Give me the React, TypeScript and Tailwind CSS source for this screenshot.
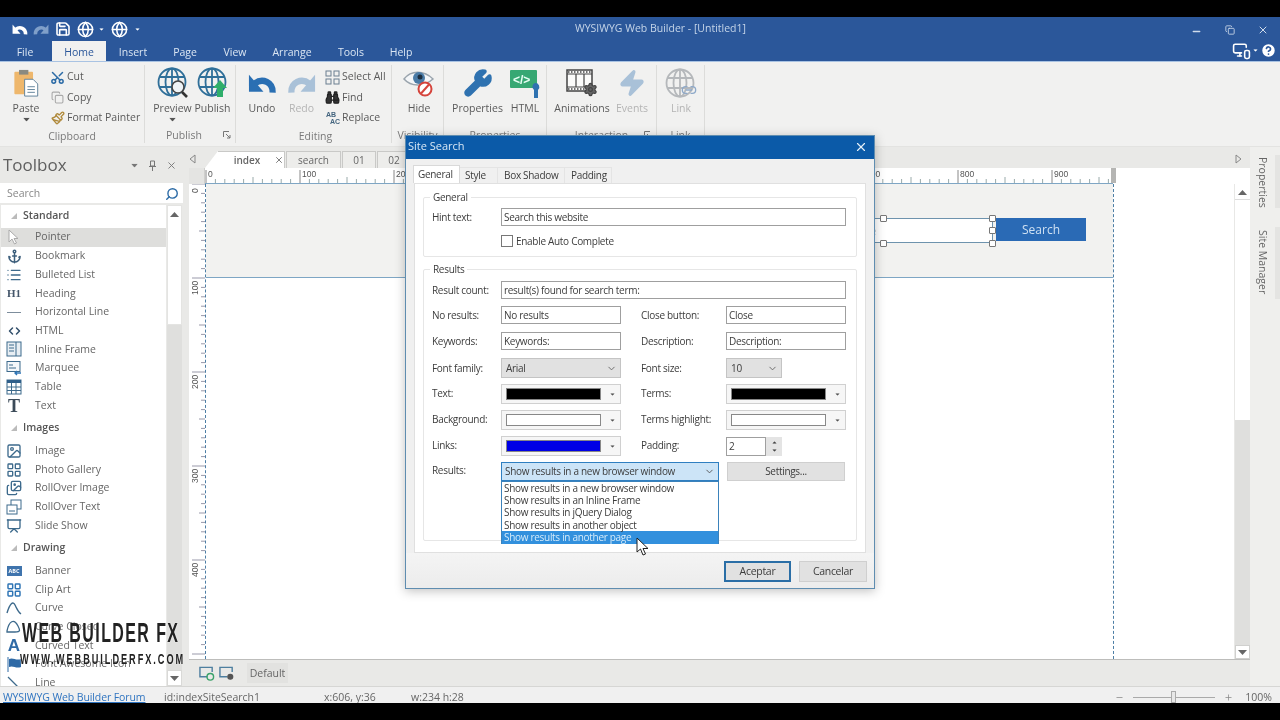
import React from "react";
import {
  Save, Globe, Search, Scissors, Copy, Paintbrush, Binoculars, Wrench, Zap, X, Minus, Anchor, List, ChevronLeft, ChevronRight,
  ChevronDown, Plus, Settings, Link2, HelpCircle, MonitorSmartphone, Image as ImageIcon, LayoutGrid, Images, Presentation,
} from "lucide-react";

const Tri = ({ up = false, cls = "" }: { up?: boolean; cls?: string }) => (
  <svg width="9" height="5" viewBox="0 0 9 5" className={cls}>
    <path d={up ? "M4.5 0 9 5H0z" : "M0 0h9L4.5 5z"} fill="currentColor" />
  </svg>
);

const CurlArrow = ({ w, h, color, flip }: { w: number; h: number; color: string; flip?: boolean }) => (
  <svg width={w} height={h} viewBox="0 0 30 22" className={flip ? "-scale-x-100" : ""}>
    <path d="M25.500 21C26 10 15 5.500 7 11.500" fill="none" stroke={color} strokeWidth="6.500" />
    <path d="M1 2.500V20h15z" fill={color} />
  </svg>
);

const GlobeIcon = ({ color = "#2f6f99", children }: { color?: string; children?: React.ReactNode }) => (
  <svg width="32" height="32" viewBox="0 0 32 32">
    <g fill="none" stroke={color} strokeWidth="1.8">
      <circle cx="15" cy="15" r="13.5" />
      <ellipse cx="15" cy="15" rx="6.5" ry="13.5" />
      <path d="M2 10h26M2 20h26M15 1.5v27" />
    </g>
    {children}
  </svg>
);

const BigBtn = ({ w, label, muted, drop, children }: { w: string; label: string; muted?: boolean; drop?: boolean; children: React.ReactNode }) => (
  <div className={`flex flex-col items-center shrink-0 ${w}`}>
    <div className="h-[36px] flex items-center justify-center">{children}</div>
    <div className={`h-[15px] leading-[15px] text-[10.5px] whitespace-nowrap ${muted ? "text-[#b4b4b4]" : "text-[#5a5a5a]"}`}>{label}</div>
    {drop && <Tri cls="text-[#555] mt-[1px] scale-75" />}
  </div>
);

const SmallBtn = ({ icon, label }: { icon: React.ReactNode; label: string }) => (
  <div className="flex items-center h-[20.5px] whitespace-nowrap text-[10.5px] text-[#5a5a5a]">
    <div className="w-[17px] flex justify-center shrink-0">{icon}</div>
    <span className="ml-[1px]">{label}</span>
  </div>
);

const Group = ({ w, label, labelCls = "", launcher, children }: { w: string; label: string; labelCls?: string; launcher?: boolean; children: React.ReactNode }) => (
  <div className={`relative flex flex-col shrink-0 border-r border-[#dcdcda] mt-[3px] mb-[3px] ${w}`}>
    <div className="flex h-[65px] items-start">{children}</div>
    <div className={`h-[15px] leading-[15px] text-center text-[10.5px] text-[#7a7a7a] ${labelCls}`}>{label}</div>
    {launcher && (
      <svg width="8" height="8" viewBox="0 0 8 8" className="absolute right-[4px] bottom-[4px]">
        <path d="M.5 6V.5H6M3 3l4 4M7 4v3H4" fill="none" stroke="#777" />
      </svg>
    )}
  </div>
);

const BoxIcon = ({ children }: { children: React.ReactNode }) => (
  <svg width="16" height="16" viewBox="0 0 16 16" fill="none" stroke="#3d6a8c" strokeWidth="1">{children}</svg>
);

type Tool = { n: string; i: React.ReactNode };
const standard: Tool[] = [
  { n: "Pointer", i: <svg width="14" height="16" viewBox="0 0 14 16"><path d="M2 1v12l3-3 2.500 5 2-1-2.500-4.500h4z" fill="#fff" stroke="#aaa" /></svg> },
  { n: "Bookmark", i: <Anchor size={15} color="#3d5f7c" strokeWidth={2.4} /> },
  { n: "Bulleted List", i: <List size={16} color="#3d6a8c" strokeWidth={2} /> },
  { n: "Heading", i: <span className="font-['Liberation_Serif',serif] font-bold text-[11px] text-[#44566a]">H1</span> },
  { n: "Horizontal Line", i: <div className="w-[14px] h-[1px] bg-[#7d8d9c]" /> },
  { n: "HTML", i: <span className="flex text-[#33506b] -space-x-[5px]"><ChevronLeft size={12} strokeWidth={3} /><ChevronRight size={12} strokeWidth={3} /></span> },
  { n: "Inline Frame", i: <BoxIcon><rect x="1" y="1" width="14" height="14" fill="#e8eef3" /><path d="M10 1v14M3 4h5M3 7h5M3 10h5" /></BoxIcon> },
  { n: "Marquee", i: <BoxIcon><rect x="1" y="1.500" width="13" height="10" fill="#f4f7fa" /><path d="M3 5h4M3 8h7" /><path d="M9 13h6M11 11l-2 2 2 2" stroke="#2e74b5" strokeWidth="1.400" /></BoxIcon> },
  { n: "Table", i: <BoxIcon><rect x="1" y="1" width="14" height="14" /><path d="M1 2.500h14" strokeWidth="3" stroke="#2f5f8a" /><path d="M1 8h14M1 11.500h14M5.500 4v11M10 4v11" /></BoxIcon> },
  { n: "Text", i: <span className="font-['Liberation_Serif',serif] font-bold text-[18px] leading-none text-[#3b4a58]">T</span> },
];
const images: Tool[] = [
  { n: "Image", i: <ImageIcon size={16} color="#3d6a8c" /> },
  { n: "Photo Gallery", i: <LayoutGrid size={16} color="#3d6a8c" /> },
  { n: "RollOver Image", i: <Images size={16} color="#3d6a8c" /> },
  { n: "RollOver Text", i: <BoxIcon><rect x="5" y="1" width="10" height="9" /><rect x="1" y="6" width="10" height="9" fill="#fff" /><path d="M3 12h6" /></BoxIcon> },
  { n: "Slide Show", i: <Presentation size={16} color="#3d6a8c" /> },
];
const drawing: Tool[] = [
  { n: "Banner", i: <div className="w-[15px] h-[10px] bg-[#3f74ad] text-[5.500px] leading-[10px] text-center text-white font-bold">ABC</div> },
  { n: "Clip Art", i: <LayoutGrid size={16} color="#2e74b5" strokeWidth={2.200} /> },
  { n: "Curve", i: <BoxIcon><path d="M1 13C4 3 7 1 9 5s3 7 6 9" strokeWidth="1.400" /></BoxIcon> },
  { n: "Curve Closed", i: <BoxIcon><path d="M1 12C3 2 8-1 12 7c2 4 3 6-3 6H1z" strokeWidth="1.300" /></BoxIcon> },
  { n: "Curved Text", i: <span className="font-['Liberation_Sans',sans-serif] font-bold text-[17px] leading-none text-[#2f6aa6]">A</span> },
  { n: "Font Awesome Icon", i: <svg width="16" height="16" viewBox="0 0 16 16"><path d="M2 1v15" stroke="#2f6aa6" /><path d="M3 3c4-2 7 2 12 0v8c-5 2-8-2-12 0z" fill="#2f6aa6" /></svg> },
  { n: "Line", i: <BoxIcon><path d="M2 2l12 12" strokeWidth="1.300" /></BoxIcon> },
];

const ToolRow = ({ t, active }: { t: Tool; active?: boolean }) => (
  <div className={`flex items-center h-[18.7px] text-[10.5px] text-[#666] ${active ? "bg-[#dededc]" : ""}`}>
    <div className="w-[22px] ml-[2px] mr-[10px] flex justify-center shrink-0">{t.i}</div>
    <span className="whitespace-nowrap">{t.n}</span>
  </div>
);

const SectionHead = ({ label, h }: { label: string; h: string }) => (
  <div className={`flex items-center ${h} text-[10.5px] font-semibold text-[#555]`}>
    <svg width="6" height="6" viewBox="0 0 6 6" className="ml-[10px] mr-[6px]"><path d="M6 0v6H0z" fill="#bbb" /></svg>
    {label}
  </div>
);

const HRuler = () => {
  const ticks = [];
  for (let i = 0; i <= 97; i++) {
    const x = 1 + i * 9.4;
    ticks.push(<path key={i} d={`M${x} ${i % 10 === 0 ? 2 : i % 5 === 0 ? 9 : 11}V16`} stroke={i % 10 === 0 ? "#888" : "#9aa"} strokeWidth="1" />);
  }
  const labels = [0, 100, 200, 300, 400, 500, 600, 700, 800, 900];
  return (
    <svg width="908" height="16" className="block">
      {ticks}
      {labels.map((l, k) => (
        <text key={l} x={3 + k * 94} y="9" fontSize="8.5" fill="#555" fontFamily="Liberation Sans, sans-serif">{l}</text>
      ))}
      <path d="M0 15.500h908" stroke="#7fa6c4" />
    </svg>
  );
};

const VRuler = () => {
  const ticks = [];
  for (let i = 0; i <= 51; i++) {
    const y = i * 9.4;
    ticks.push(<path key={i} d={`M${i % 10 === 0 ? 3 : i % 5 === 0 ? 10 : 12} ${y}H16`} stroke="#99a" strokeWidth="1" />);
  }
  return (
    <svg width="16" height="476" className="block">
      {ticks}
      {[0, 100, 200, 300, 400].map((l, k) => (
        <text key={l} x="0" y="0" fontSize="8.5" fill="#555" fontFamily="Liberation Sans, sans-serif" transform={`translate(9 ${l === 0 ? 9 : 17 + k * 94}) rotate(-90)`}>{l}</text>
      ))}
    </svg>
  );
};

const DocTab = ({ w, label, active }: { w: string; label: string; active?: boolean }) => (
  <div className={`h-[17px] flex items-center justify-center text-[10px] text-[#666] border-t border-r border-[#c9c9c7] shrink-0 ${w} ${active ? "bg-white font-semibold pl-[10px]" : "bg-[#ededeb] border-l"}`}>
    {label}
    {active && <X size={10} className="ml-[14px] mr-[-6px] text-[#666]" />}
  </div>
);

const Handle = ({ cls }: { cls: string }) => <div className={`absolute w-[7px] h-[7px] bg-white border border-[#777] rounded-[1px] ${cls}`} />;

const Label = ({ w, children }: { w: string; children: React.ReactNode }) => <div className={`shrink-0 ${w}`}>{children}</div>;

const Input = ({ w, value }: { w: string; value: string }) => (
  <div className={`h-[18px] border border-[#9f9f9f] bg-white px-[2px] leading-[16px] whitespace-nowrap overflow-hidden shrink-0 ${w}`}>{value}</div>
);

const GraySelect = ({ w, value }: { w: string; value: string }) => (
  <div className={`h-[20px] border border-[#c4c4c4] bg-[#e1e1e1] flex items-center justify-between pl-[3px] pr-[3px] shrink-0 ${w}`}>
    <span className="ml-[1px]">{value}</span>
    <ChevronDown size={11} className="text-[#666]" />
  </div>
);

const ColorPick = ({ swatch }: { swatch: string }) => (
  <div className="h-[20px] w-[120px] border border-[#d0d0d0] bg-[#f6f6f6] flex items-center pl-[4px] shrink-0">
    <div className={`w-[95px] h-[12px] border border-[#888] ${swatch}`} />
    <Tri cls="ml-[7px] scale-50 text-[#555]" />
  </div>
);

const Row = ({ cls, children }: { cls: string; children: React.ReactNode }) => <div className={`flex items-center pl-[8px] ${cls}`}>{children}</div>;

const Fieldset = ({ legend, cls, children }: { legend: string; cls: string; children: React.ReactNode }) => (
  <div className={`relative border border-[#e6e6e6] rounded-[2px] ml-[8px] w-[434px] ${cls}`}>
    <div className="absolute -top-[7px] left-[6px] bg-white px-[3px] leading-[13px]">{legend}</div>
    {children}
  </div>
);

const DialogTab = ({ w, label, active, pl }: { w: string; label: string; active?: boolean; pl: string }) => (
  <div className={`flex items-center shrink-0 whitespace-nowrap ${pl} ${w} ${active ? "h-[18px] bg-white border border-b-0 border-[#d9d9d9]" : "h-[16px] bg-[#f0f0f0] border-t border-r border-[#e4e4e4]"}`}>{label}</div>
);

const Dialog = () => (
  <div className="absolute left-[405px] top-[135px] w-[470px] h-[454px] bg-[#f0f0f0] border border-[#5f8db0] flex flex-col font-['Open_Sans',sans-serif] text-[10px] tracking-[-0.3px] text-[#3c3c3c] shadow-[0_2px_10px_rgba(0,0,0,0.25)]">
    <div className="h-[23px] bg-[#0b5aa8] flex items-center justify-between pl-[2px] pr-[6px] pb-[2px] shrink-0">
      <span className="text-[11px] tracking-normal text-[#d9e8f5]">Site Search</span>
      <X size={14} className="text-[#e6f0f8]" />
    </div>
    <div className="flex items-end h-[25px] pl-[7px] pb-[1px] shrink-0">
      <DialogTab w="w-[47px]" pl="pl-[4px]" label="General" active />
      <DialogTab w="w-[38px]" pl="pl-[5px]" label="Style" />
      <DialogTab w="w-[67px]" pl="pl-[6px]" label="Box Shadow" />
      <DialogTab w="w-[47px]" pl="pl-[6px]" label="Padding" />
    </div>
    <div className="w-[452px] ml-[8px] h-[370px] bg-white border border-[#e0e0e0] -mt-[1px] pt-[13px] shrink-0 relative">
      <Fieldset legend="General" cls="h-[60px] ml-[8px]">
        <Row cls="mt-[10px] h-[18px]">
          <Label w="w-[69px]">Hint text:</Label>
          <Input w="w-[345px]" value="Search this website" />
        </Row>
        <Row cls="mt-[9px] h-[12px]">
          <div className="ml-[69px] w-[12px] h-[12px] border border-[#777] bg-white mr-[3px]" />
          <span>Enable Auto Complete</span>
        </Row>
      </Fieldset>
      <Fieldset legend="Results" cls="h-[272px] mt-[12px]">
        <Row cls="mt-[11px] h-[18px]">
          <Label w="w-[69px]">Result count:</Label>
          <Input w="w-[345px]" value="result(s) found for search term:" />
        </Row>
        <Row cls="mt-[7px] h-[18px]">
          <Label w="w-[69px]">No results:</Label>
          <Input w="w-[120px]" value="No results" />
          <Label w="w-[85px] ml-[20px]">Close button:</Label>
          <Input w="w-[120px]" value="Close" />
        </Row>
        <Row cls="mt-[8px] h-[18px]">
          <Label w="w-[69px]">Keywords:</Label>
          <Input w="w-[120px]" value="Keywords:" />
          <Label w="w-[85px] ml-[20px]">Description:</Label>
          <Input w="w-[120px]" value="Description:" />
        </Row>
        <Row cls="mt-[8px] h-[20px]">
          <Label w="w-[69px]">Font family:</Label>
          <GraySelect w="w-[120px]" value="Arial" />
          <Label w="w-[85px] ml-[20px]">Font size:</Label>
          <GraySelect w="w-[56px]" value="10" />
        </Row>
        <Row cls="mt-[6px] h-[20px]">
          <Label w="w-[69px] pb-[2px]">Text:</Label>
          <ColorPick swatch="bg-black" />
          <Label w="w-[85px] ml-[20px] pb-[2px]">Terms:</Label>
          <ColorPick swatch="bg-black" />
        </Row>
        <Row cls="mt-[6px] h-[20px]">
          <Label w="w-[69px] pb-[2px]">Background:</Label>
          <ColorPick swatch="bg-white" />
          <Label w="w-[85px] ml-[20px] pb-[2px]">Terms highlight:</Label>
          <ColorPick swatch="bg-white" />
        </Row>
        <Row cls="mt-[6px] h-[20px]">
          <Label w="w-[69px] pb-[2px]">Links:</Label>
          <ColorPick swatch="bg-[#0000e6]" />
          <Label w="w-[85px] ml-[20px] pb-[2px]">Padding:</Label>
          <div className="h-[19px] w-[40px] border border-[#9f9f9f] bg-white px-[2px] leading-[17px] shrink-0">2</div>
          <div className="h-[19px] w-[16px] bg-[#e4e4e4] flex flex-col items-center justify-center gap-[3px] text-[#444] shrink-0">
            <Tri up cls="scale-50" />
            <Tri cls="scale-50" />
          </div>
        </Row>
        <Row cls="mt-[6px] h-[19px]">
          <Label w="w-[69px] pb-[2px]">Results:</Label>
          <div className="relative h-[19px] w-[218px] border border-[#2f7fc1] bg-[#cce4f7] flex items-center justify-between px-[3px] shrink-0">
            <span className="whitespace-nowrap">Show results in a new browser window</span>
            <ChevronDown size={11} className="text-[#555]" />
            <div className="absolute left-[-1px] top-[18px] w-[218px] h-[63px] bg-white border border-[#3b82bb] leading-[12.200px] z-10">
              <div className="pl-[2px] h-[12.200px]">Show results in a new browser window</div>
              <div className="pl-[2px] h-[12.200px]">Show results in an Inline Frame</div>
              <div className="pl-[2px] h-[12.200px]">Show results in jQuery Dialog</div>
              <div className="pl-[2px] h-[12.200px]">Show results in another object</div>
              <div className="pl-[2px] h-[13px] bg-[#3290dd] text-[#d5ebfa]">Show results in another page</div>
            </div>
          </div>
          <div className="h-[19px] w-[118px] ml-[8px] border border-[#cfcfcf] bg-[#e1e1e1] flex items-center justify-center shrink-0">Settings...</div>
        </Row>
      </Fieldset>
      <svg width="14" height="20" viewBox="0 0 14 20" className="absolute left-[221px] top-[353px] z-20">
        <path d="M1 1v14l3.500-3 2.500 6 2.500-1-2.500-5.500H12z" fill="#fff" stroke="#222" strokeWidth="1" />
      </svg>
    </div>
    <div className="flex-1 flex items-center justify-end pr-[7px] pt-[2px] gap-[8px] text-[10.5px] bg-gradient-to-b from-[#f4f4f4] to-[#ececec]">
      <div className="w-[67px] h-[21px] border-2 border-[#2a6ea6] bg-[#e1e1e1] flex items-center justify-center">Aceptar</div>
      <div className="w-[68px] h-[21px] border border-[#cfcfcf] bg-[#e1e1e1] flex items-center justify-center">Cancelar</div>
    </div>
  </div>
);

export default function App() {
  return (
    <div className="relative w-[1280px] h-[720px] overflow-hidden bg-black flex flex-col font-['Open_Sans',sans-serif] blur-[0.35px]">
      <div className="h-[17px] shrink-0" />
      {/* Title bar + ribbon tabs */}
      <div className="h-[45px] shrink-0 bg-[#2b579a] border-b border-[#a9c3e3] flex flex-col text-[#dbe6f3]">
        <div className="h-[24px] relative flex items-center pl-[12px] gap-[5px]">
          <CurlArrow w={16} h={12} color="#fff" />
          <CurlArrow w={16} h={12} color="#7f9fc9" flip />
          <Save size={16} strokeWidth={2.400} className="text-white ml-[1px]" />
          <Globe size={17} strokeWidth={2.200} className="text-white ml-[1px]" />
          <Tri cls="scale-50 -ml-[2px] text-white" />
          <Globe size={17} strokeWidth={2.200} className="text-white" />
          <Tri cls="scale-50 text-white" />
          <span className="absolute left-0 right-0 text-center text-[10.500px] text-[#c4d4e8] pl-[41px] pointer-events-none">WYSIWYG Web Builder - [Untitled1]</span>
          <div className="absolute right-[6px] top-[6px] flex items-center text-[#d0dceb]">
            <Minus size={11} strokeWidth={3} className="mr-[23px] mt-[3px]" />
            <Copy size={10} className="mr-[22px]" />
            <X size={12} strokeWidth={2} className="mr-[5px]" />
          </div>
        </div>
        <div className="h-[20px] flex text-[10.5px] items-end relative">
          <div className="w-[50px] mr-[2px] h-[20px] leading-[22px] text-center">File</div>
          <div className="w-[54px] h-[20px] leading-[22px] text-center bg-[#f1f1f0] text-[#2b579a]">Home</div>
          <div className="w-[54px] h-[20px] leading-[22px] text-center">Insert</div>
          <div className="w-[50px] h-[20px] leading-[22px] text-center">Page</div>
          <div className="w-[50px] h-[20px] leading-[22px] text-center">View</div>
          <div className="w-[64px] h-[20px] leading-[22px] text-center">Arrange</div>
          <div className="w-[54px] h-[20px] leading-[22px] text-center">Tools</div>
          <div className="w-[46px] h-[20px] leading-[22px] text-center">Help</div>
          <div className="absolute right-[3px] top-[0px] flex items-center text-white">
            <MonitorSmartphone size={19} />
            <Tri cls="scale-50" />
            <HelpCircle size={17} strokeWidth={2.400} fill="#fff" className="text-[#2b579a]" />
          </div>
        </div>
      </div>
      {/* Ribbon */}
      <div className="h-[85px] shrink-0 bg-[#f1f1f0] flex border-b border-[#e3e3e1]">
        <Group w="w-[145px]" label="Clipboard">
          <div className="flex pl-[3px]">
            <BigBtn w="w-[46px]" label="Paste" drop>
              <svg width="27" height="28" viewBox="0 0 28 30">
                <rect x="1" y="3" width="20" height="24" rx="1" fill="#eeb76c" />
                <rect x="6" y="1" width="10" height="5" fill="#8a8a80" />
                <path d="M12 11h9l5 5v13H12z" fill="#fff" stroke="#5c7f98" />
                <path d="M15 19h8M15 22h8M15 25h8" stroke="#5c7f98" />
              </svg>
            </BigBtn>
            <div className="flex flex-col mt-[2px]">
              <SmallBtn icon={<Scissors size={15} className="text-[#2c6ba6] -rotate-90" strokeWidth={2.400} />} label="Cut" />
              <SmallBtn icon={<Copy size={13} className="text-[#a9a9a9]" />} label="Copy" />
              <SmallBtn icon={<Paintbrush size={14} className="text-[#b08a3c]" strokeWidth={2.400} />} label="Format Painter" />
            </div>
          </div>
        </Group>
        <Group w="w-[91px]" label="Publish" labelCls="pr-[12px]" launcher>
          <div className="flex pl-[7px]">
            <BigBtn w="w-[41px]" label="Preview" drop>
              <GlobeIcon>
                <circle cx="21" cy="20" r="6" fill="#eef3f6" stroke="#444" strokeWidth="1.600" />
                <path d="M25 25l5 5" stroke="#333" strokeWidth="2.600" />
              </GlobeIcon>
            </BigBtn>
            <BigBtn w="w-[39px]" label="Publish">
              <GlobeIcon>
                <path d="M23 13l7 8h-4v9h-6v-9h-4z" fill="#2fae6a" />
              </GlobeIcon>
            </BigBtn>
          </div>
        </Group>
        <Group w="w-[156px]" label="Editing" labelCls="pl-[4px]">
          <div className="flex pl-[6px]">
            <BigBtn w="w-[40px]" label="Undo"><CurlArrow w={29} h={22} color="#2a6fb3" /></BigBtn>
            <BigBtn w="w-[39px]" label="Redo" muted><CurlArrow w={29} h={22} color="#a9c1d8" flip /></BigBtn>
            <div className="flex flex-col mt-[2px] ml-[3px]">
              <SmallBtn
                icon={
                  <svg width="15" height="15" viewBox="0 0 15 15" fill="none" stroke="#6b7f90"><rect x="1" y="1" width="5" height="5" /><rect x="9" y="1" width="5" height="5" /><rect x="1" y="9" width="5" height="5" /><rect x="9" y="9" width="5" height="5" /></svg>
                }
                label="Select All"
              />
              <SmallBtn icon={<Binoculars size={15} className="text-[#222]" fill="#333" />} label="Find" />
              <SmallBtn
                icon={
                  <svg width="16" height="16" viewBox="0 0 16 16">
                    <text x="1" y="7" fontSize="7" fontWeight="bold" fill="#44657f" fontFamily="Liberation Sans, sans-serif">AB</text>
                    <text x="5" y="14" fontSize="7" fontWeight="bold" fill="#44657f" fontFamily="Liberation Sans, sans-serif">AC</text>
                  </svg>
                }
                label="Replace"
              />
            </div>
          </div>
        </Group>
        <Group w="w-[52px]" label="Visibility">
          <div className="pl-[1px]">
            <BigBtn w="w-[52px]" label="Hide">
              <svg width="32" height="30" viewBox="0 0 32 30">
                <path d="M1 11C8 2 21 2 30 11 21 19 8 19 1 11z" fill="#f4f6f8" stroke="#9aa4ad" strokeWidth="1.500" />
                <circle cx="16" cy="10" r="6" fill="#4a7ba6" />
                <circle cx="17" cy="9" r="2.500" fill="#1d2f40" />
                <circle cx="22" cy="21" r="6.500" fill="#fff" stroke="#d5443c" strokeWidth="2" />
                <path d="M18 25.500l8-9" stroke="#d5443c" strokeWidth="2" />
              </svg>
            </BigBtn>
          </div>
        </Group>
        <Group w="w-[103px]" label="Properties">
          <div className="flex pl-[4px]">
            <BigBtn w="w-[59px]" label="Properties"><Wrench size={30} className="text-[#2f72b0]" fill="#2f72b0" /></BigBtn>
            <BigBtn w="w-[36px]" label="HTML">
              <svg width="32" height="30" viewBox="0 0 32 30">
                <rect x="1" y="2" width="27" height="18" rx="1" fill="#37a873" />
                <text x="4" y="16" fontSize="12" fontWeight="bold" fill="#e8fff4" fontFamily="Liberation Sans, sans-serif">&lt;/&gt;</text>
                <path d="M26 15a4 4 0 0 1 3 7v8h-4v-8a4 4 0 0 1 1-7z" fill="#2f72b0" />
              </svg>
            </BigBtn>
          </div>
        </Group>
        <Group w="w-[110px]" label="Interaction" launcher>
          <div className="flex pl-[5px]">
            <BigBtn w="w-[60px]" label="Animations">
              <span className="relative block w-[32px] h-[28px]">
                <svg width="27" height="24" viewBox="0 0 27 24" fill="none" stroke="#444">
                  <rect x="1" y="1" width="25" height="21" fill="#fbfbfa" strokeWidth="1.500" />
                  <path d="M1 5h25M1 18h25M10 5v13M18 5v13" strokeWidth="1.200" />
                  <path d="M2 3h23M2 20h23" strokeDasharray="1.500 1.500" strokeWidth="1.500" />
                </svg>
                <Settings size={15} className="absolute right-[0px] bottom-0 text-[#444]" fill="#666" />
              </span>
            </BigBtn>
            <div className="ml-[2px]">
              <BigBtn w="w-[36px]" label="Events" muted><Zap size={28} className="text-[#a9c1d8]" fill="#a9c1d8" /></BigBtn>
            </div>
          </div>
        </Group>
        <Group w="w-[48px]" label="Link">
          <BigBtn w="w-[48px]" label="Link" muted>
            <span className="relative block w-[32px] h-[30px]">
              <GlobeIcon color="#b5b8bb" />
              <Link2 size={16} className="absolute right-0 bottom-0 text-[#8ea9c9]" />
            </span>
          </BigBtn>
        </Group>
      </div>
      {/* Main */}
      <div className="h-[539px] shrink-0 flex bg-[#e9e9e7]">
        {/* Toolbox */}
        <div className="w-[183px] shrink-0 flex flex-col">
          <div className="h-[36px] flex items-center justify-between pl-[3px] pr-[6px] shrink-0">
            <span className="text-[17px] text-[#5f5f5f]">Toolbox</span>
            <span className="flex items-center gap-[9px] text-[#777]">
              <Tri cls="scale-75" />
              <svg width="9" height="11" viewBox="0 0 9 11" fill="none" stroke="#777"><path d="M2.500 1h4v5h-4zM1 6.500h7M4.500 7v4" /></svg>
              <X size={11} />
            </span>
          </div>
          <div className="h-[20px] bg-white flex items-center justify-between pl-[7px] pr-[4px] pt-[1px] text-[10.5px] text-[#888] shrink-0">
            Search
            <Search size={14} strokeWidth={2.400} className="text-[#2c6ba6] -scale-x-100" />
          </div>
          <div className="mt-[2px] flex-1 flex min-h-0">
            <div className="w-[165px] ml-[1px] bg-white overflow-hidden">
              <SectionHead label="Standard" h="h-[23px] pb-[2px]" />
              {standard.map((t, i) => <ToolRow key={t.n} t={t} active={i === 0} />)}
              <SectionHead label="Images" h="h-[26.600px]" />
              {images.map((t) => <ToolRow key={t.n} t={t} />)}
              <SectionHead label="Drawing" h="h-[26.600px]" />
              {drawing.map((t) => <ToolRow key={t.n} t={t} />)}
            </div>
            <div className="w-[15px] flex flex-col justify-between bg-[#dfdfdd] ml-[1px]">
              <div className="h-[120px] bg-white border border-[#e4e4e2] pt-[6px] flex justify-center"><Tri up cls="text-[#666]" /></div>
              <div className="h-[16px] bg-white border border-[#d9d9d7] flex items-center justify-center"><Tri cls="text-[#666]" /></div>
            </div>
          </div>
        </div>
        {/* Workspace */}
        <div className="flex-1 flex flex-col min-w-0">
          <div className="h-[21px] flex items-end shrink-0 pl-[6px]">
            <svg width="8" height="10" viewBox="0 0 8 10" className="self-center mt-[3px] shrink-0"><path d="M6 1v8L1 5z" fill="none" stroke="#888" /></svg>
            <div className="ml-[8px] flex gap-[1px]">
              <svg width="13" height="17" viewBox="0 0 13 17" className="shrink-0 -mr-[1px]"><path d="M0 17 13 0v17z" fill="#fff" /></svg>
              <DocTab w="w-[67px]" label="index" active />
              <DocTab w="w-[55px]" label="search" />
              <DocTab w="w-[34px]" label="01" />
              <DocTab w="w-[34px]" label="02" />
            </div>
            <svg width="8" height="10" viewBox="0 0 8 10" className="ml-auto mr-[8px] self-center mt-[3px] shrink-0"><path d="M2 1v8l5-4z" fill="none" stroke="#888" /></svg>
          </div>
          <div className="ml-[6px] h-[492px] shrink-0 flex flex-col bg-white border-b border-[#bdbdbb]">
            <div className="h-[16px] flex shrink-0 bg-white">
              <div className="w-[16px] h-[16px] bg-[#e4e4e2] border-r border-[#cfcfcd] shrink-0" />
              <div className="w-[908px] shrink-0"><HRuler /></div>
              <div className="w-[5px] h-[15px] bg-[#b5b5b3] -ml-[2px] shrink-0" />
            </div>
            <div className="flex h-[476px] min-h-0">
              <div className="w-[16px] shrink-0 bg-white"><VRuler /></div>
              <div className="w-[909px] shrink-0 flex flex-col border-l border-dashed border-[#4d7ea5] border-r">
                <div className="relative h-[94px] bg-[#f2f2f0] border-b border-[#7ea6c4] shrink-0">
                  <div className="absolute left-[570px] top-[34px] w-[217px] h-[25px] bg-white border border-[#6e93ad] text-[10.5px] text-[#c6c6c6] leading-[25px] pl-[5px]">Search this website</div>
                  <Handle cls="left-[674px] top-[31px]" />
                  <Handle cls="left-[783px] top-[31px]" />
                  <Handle cls="left-[783px] top-[43px]" />
                  <Handle cls="left-[674px] top-[56px]" />
                  <Handle cls="left-[783px] top-[56px]" />
                  <div className="absolute left-[790px] top-[34px] w-[90px] h-[23px] bg-[#2a6ab5] text-[#cfe1f3] text-[12px] leading-[23px] text-center">Search</div>
                </div>
              </div>
              <div className="flex-1" />
              <div className="w-[16px] shrink-0 flex flex-col justify-between bg-[#dfdfdd] border-l border-[#e8e8e6]">
                <div className="h-[236px] bg-white pt-[6px] flex justify-center"><div className="w-full h-[15px] -mt-[5px] border-b border-[#ddd] flex items-center justify-center"><Tri up cls="text-[#666]" /></div></div>
                <div className="h-[14px] bg-white border border-[#d0d0ce] flex items-center justify-center"><Tri cls="text-[#666]" /></div>
              </div>
            </div>
          </div>
          <div className="flex-1 flex items-center pl-[16px] text-[#7a9a9a]">
            <svg width="16" height="15" viewBox="0 0 17 15" fill="none" stroke="#4e7f9f" strokeWidth="1.500"><path d="M9 11H1V1h13v5" /><circle cx="12" cy="11" r="3.500" stroke="#3aa26a" /></svg>
            <svg width="16" height="15" viewBox="0 0 17 15" fill="none" stroke="#4e7f9f" strokeWidth="1.500" className="ml-[4px]"><path d="M9 11H1V1h13v5" /><circle cx="12" cy="11" r="2.500" fill="#555" stroke="#555" /></svg>
            <div className="ml-[12px] w-[41px] h-[20px] bg-[#e2e2e0] text-[10.5px] text-[#666] leading-[20px] text-center">Default</div>
          </div>
        </div>
        {/* Right dock */}
        <div className="w-[30px] shrink-0 bg-[#efefed] relative">
          <div className="absolute right-0 top-[8px] w-[5px] h-[53px] bg-[#e4e4e2]" />
          <div className="absolute right-0 top-[80px] w-[5px] h-[72px] bg-[#e4e4e2]" />
          <div className="absolute left-[4px] top-[10px] [writing-mode:vertical-rl] text-[10.5px] text-[#666]">Properties</div>
          <div className="absolute left-[4px] top-[83px] [writing-mode:vertical-rl] text-[10.5px] text-[#666]">Site Manager</div>
        </div>
      </div>
      {/* Status bar */}
      <div className="h-[17px] shrink-0 bg-[#f0f0f0] border-t border-[#d6d6d4] flex items-center pt-[5px] text-[10.5px] text-[#666] whitespace-nowrap overflow-hidden">
        <span className="w-[164px] pl-[3px] text-[#2f74c0] underline tracking-[-0.1px] shrink-0">WYSIWYG Web Builder Forum</span>
        <span className="w-[160px] shrink-0">id:indexSiteSearch1</span>
        <span className="w-[87px] shrink-0">x:606, y:36</span>
        <span className="shrink-0">w:234 h:28</span>
        <div className="ml-auto flex items-center text-[#888]">
          <Minus size={9} />
          <div className="relative mx-[9px] w-[82px] h-[1px] bg-[#aaa]">
            <div className="absolute left-[38px] -top-[6px] w-[5px] h-[12px] bg-[#e8e8e8] border border-[#aaa]" />
          </div>
          <Plus size={9} />
          <span className="ml-[12px] mr-[8px] text-[#666]">100%</span>
        </div>
      </div>
      <div className="h-[17px] shrink-0" />
      <Dialog />
      {/* Watermark */}
      <div className="absolute left-[22px] top-[619px] text-[28px] leading-[28px] font-bold font-['Liberation_Sans',sans-serif] text-[#222] whitespace-nowrap origin-left scale-x-[0.57] tracking-[2.500px] [text-shadow:0_0_2px_#fff]">WEB BUILDER FX</div>
      <div className="absolute left-[20px] top-[651px] text-[14px] leading-[16px] font-bold font-['Liberation_Sans',sans-serif] text-[#222] whitespace-nowrap origin-left scale-x-[0.655] tracking-[3px] [text-shadow:0_0_2px_#fff]">WWW.WEBBUILDERFX.COM</div>
    </div>
  );
}
